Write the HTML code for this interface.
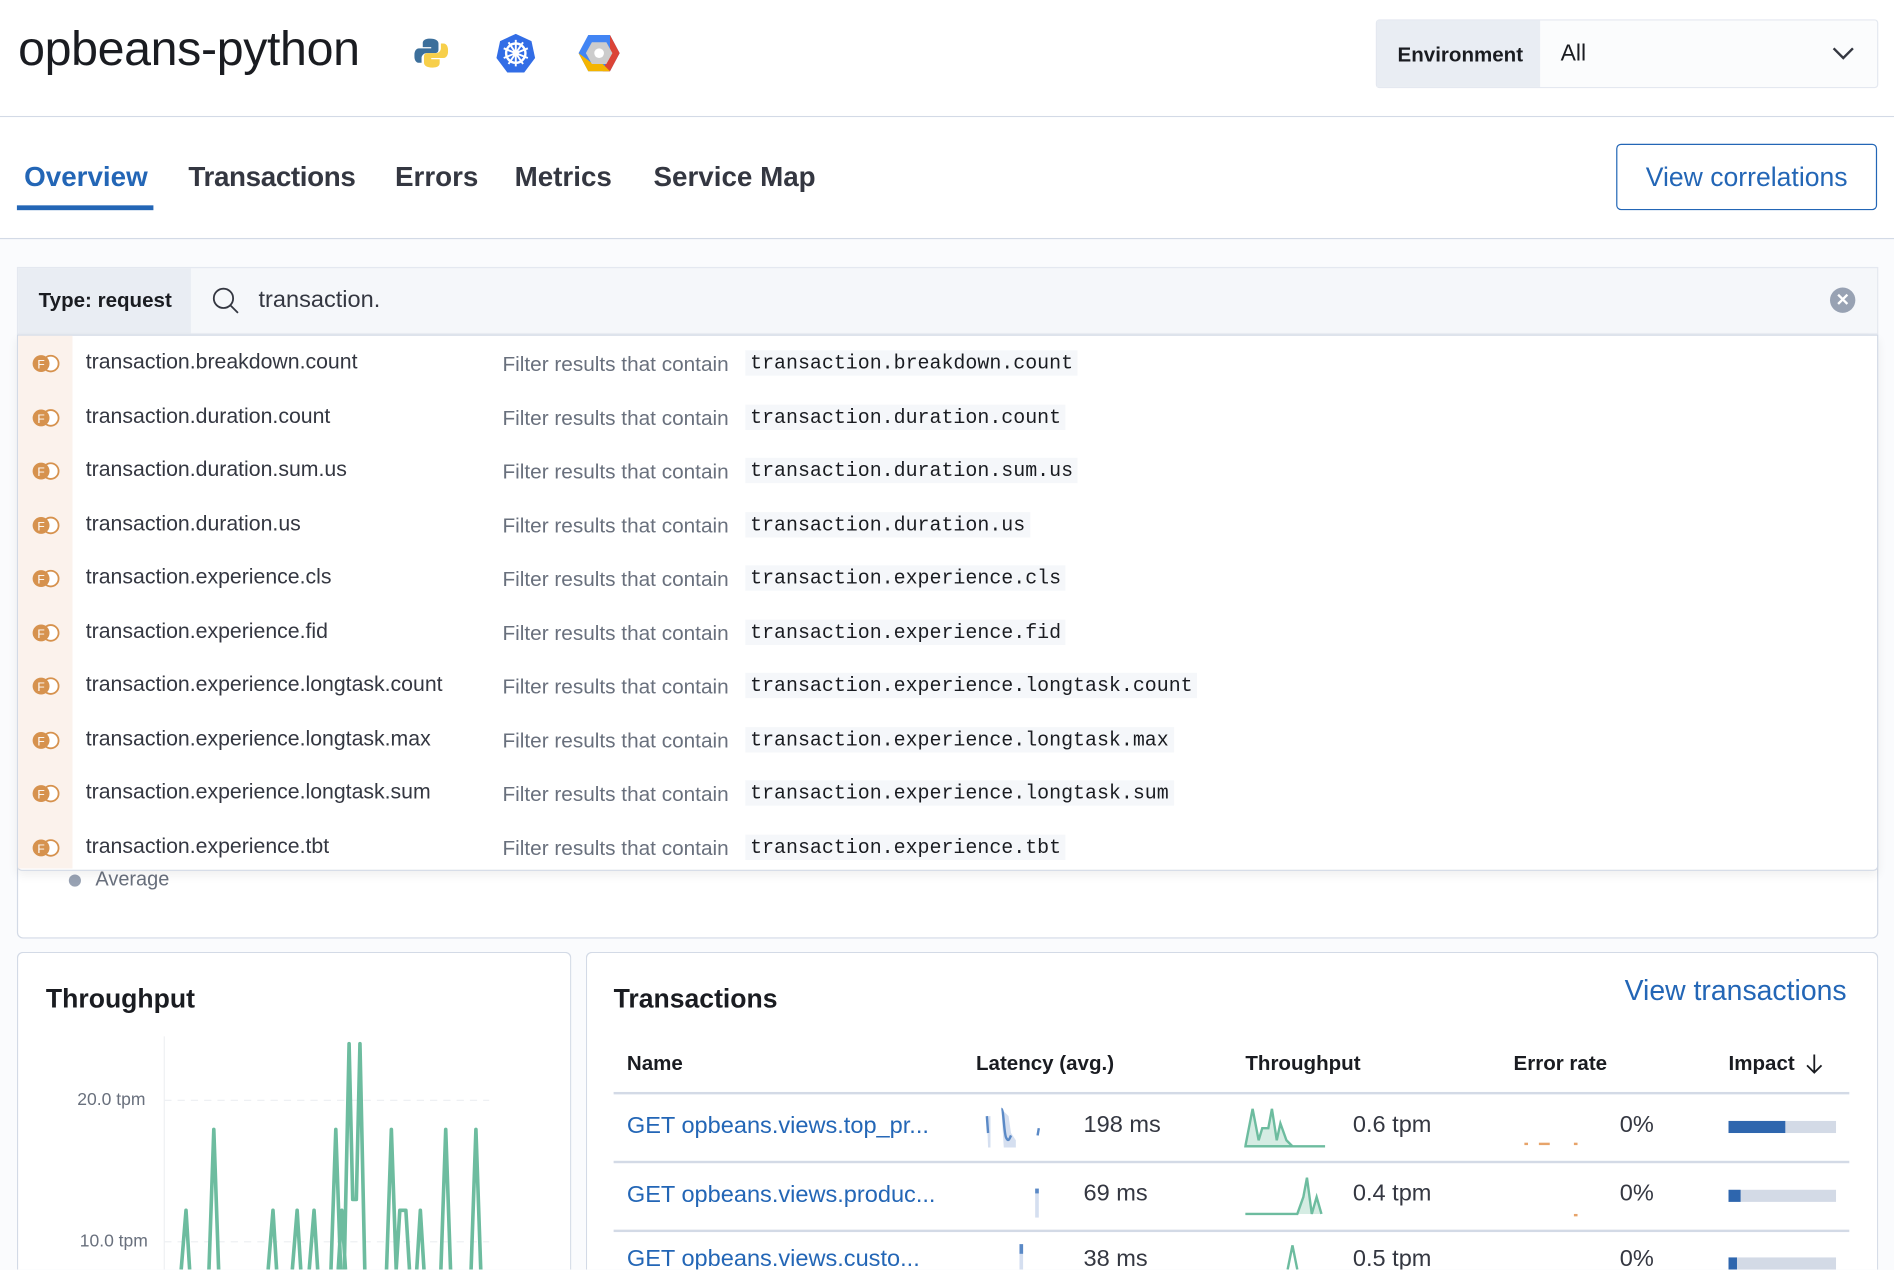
<!DOCTYPE html>
<html><head><meta charset="utf-8"><style>
html,body{margin:0;padding:0;width:1894px;height:1270px;overflow:hidden;background:#fafbfd}
#w{position:absolute;left:0;top:0;width:1568px;height:1051px;overflow:hidden;transform:scale(1.20791);transform-origin:0 0;font-family:"Liberation Sans",sans-serif;color:#343741}
.a{position:absolute}
.mono{font-family:"Liberation Mono",monospace}
</style></head><body><div id="w">
<div class="a" style="left:0;top:0;width:1568px;height:96px;background:#fff;border-bottom:1px solid #d3dae6"></div>
<div class="a" style="left:15px;top:19px;font-size:40px;color:#1a1c21;letter-spacing:-0.3px">opbeans-python</div>
<svg class="a" style="left:343px;top:30px" width="28" height="28" viewBox="0 0 28 28"><path d="M13 2c-6 0-6 3-6 4v3h7v1H4c-3 0-4 3-4 6s1 6 4 6h2v-4c0-2 2-4 4-4h7c2 0 3-1 3-3V6c0-2-2-4-7-4z" fill="#3c6f9b"/><path d="M15 26c6 0 6-3 6-4v-3h-7v-1h10c3 0 4-3 4-6s-1-6-4-6h-2v4c0 2-2 4-4 4h-7c-2 0-3 1-3 3v5c0 2 2 4 7 4z" fill="#f7cf4a"/></svg>
<svg class="a" style="left:410px;top:27px" width="34" height="34" viewBox="0 0 34 34"><path d="M17 1l13 6 3 14-9 12H10L1 21 4 7z" fill="#326de6"/><circle cx="17" cy="17" r="8" fill="none" stroke="#fff" stroke-width="2"/><path d="M17 6v22M7 13l20 8M7 21l20-8M11 8l12 18M23 8L11 26" stroke="#fff" stroke-width="1.6"/><circle cx="17" cy="17" r="2.5" fill="#fff"/></svg>
<svg class="a" style="left:478px;top:27px" width="36" height="34" viewBox="0 0 36 34"><path d="M9 2h18l8 15-8 15H9L1 17z" fill="#4285f4"/><path d="M27 2l8 15-8 15h-6l6-15z" fill="#db4437"/><path d="M1 17l8 15h18l-6-6H13z" fill="#f4b400"/><path d="M12 8h12l5 9-5 9H12l-5-9z" fill="#ccc"/><circle cx="18" cy="17" r="4" fill="#fff"/></svg>
<div class="a" style="left:1139px;top:16px;width:414px;height:55px;border:1px solid #e4e8f0;background:#fbfcfd;border-radius:3px"></div>
<div class="a" style="left:1140px;top:17px;width:135px;height:55px;background:#e9edf3"></div>
<div class="a" style="left:1157px;top:36px;font-size:17px;font-weight:bold;color:#1a1c21">Environment</div>
<div class="a" style="left:1292px;top:34px;font-size:19px;color:#1a1c21">All</div>
<svg class="a" style="left:1516px;top:37px" width="20" height="14"><path d="M2 3l8 8 8-8" stroke="#343741" stroke-width="2" fill="none"/></svg>

<div class="a" style="left:0;top:97px;width:1568px;height:100px;background:#fff;border-bottom:1px solid #d3dae6"></div>
<div class="a" style="left:20px;top:133px;font-size:23px;font-weight:bold;color:#2366b6">Overview</div>
<div class="a" style="left:14px;top:170px;width:113px;height:4px;background:#2366b6"></div>
<div class="a" style="left:156px;top:133px;font-size:23px;font-weight:bold;color:#343741;letter-spacing:-0.3px">Transactions</div>
<div class="a" style="left:327px;top:133px;font-size:23px;font-weight:bold;color:#343741">Errors</div>
<div class="a" style="left:426px;top:133px;font-size:23px;font-weight:bold;color:#343741">Metrics</div>
<div class="a" style="left:541px;top:133px;font-size:23px;font-weight:bold;color:#343741">Service Map</div>
<div class="a" style="left:1338px;top:119px;width:214px;height:53px;border:1.5px solid #2366b6;border-radius:4px;background:#fff;text-align:center;line-height:53px;font-size:22px;color:#2366b6">View correlations</div>

<div class="a" style="left:14px;top:700px;width:1539px;height:75px;background:#fff;border:1px solid #d3dae6;border-radius:5px"></div>
<div class="a" style="left:57px;top:724px;width:10px;height:10px;border-radius:5px;background:#98a2b3"></div>
<div class="a" style="left:79px;top:719px;font-size:16.5px;color:#69707d">Average</div>

<div class="a" style="left:14px;top:221px;width:1539px;height:54px;background:#f5f7fa;border:1px solid #e4e8f0"></div>
<div class="a" style="left:15px;top:222px;width:143px;height:54px;background:#e9edf3"></div>
<div class="a" style="left:32px;top:239px;font-size:17px;font-weight:bold;color:#1a1c21">Type: request</div>
<svg class="a" style="left:174px;top:236px" width="26" height="26"><circle cx="11" cy="11" r="8" stroke="#343741" stroke-width="1.5" fill="none"/><path d="M17 17l6 6" stroke="#343741" stroke-width="1.5"/></svg>
<div class="a" style="left:214px;top:237px;font-size:19.5px;color:#343741">transaction.</div>
<div class="a" style="left:1515px;top:238px;width:21px;height:21px;border-radius:11px;background:#98a2b3;color:#fff;text-align:center;line-height:21px;font-size:14px;font-weight:bold">✕</div>

<div class="a" style="left:14px;top:277px;width:1539px;height:442px;background:#fff;border:1px solid #d3dae6;border-radius:0 0 4px 4px;box-shadow:0 4px 8px rgba(0,0,0,.06)"></div>
<div class="a" style="left:15px;top:278px;width:45px;height:441px;background:#fbf2ec"></div>
<div id="sug"></div>

<div class="a" style="left:14px;top:788px;width:457px;height:263px;background:#fff;border:1px solid #d3dae6;border-bottom:none;border-radius:5px 5px 0 0"></div>
<div class="a" style="left:38px;top:814px;font-size:22px;font-weight:bold;color:#1a1c21">Throughput</div>
<div class="a" style="left:64px;top:903px;font-size:14.5px;color:#69707d">20.0 tpm</div>
<div class="a" style="left:66px;top:1020px;font-size:14.5px;color:#69707d">10.0 tpm</div>
<svg class="a" style="left:130px;top:850px" width="280" height="201">
<path d="M6 8V201" stroke="#eef0f3"/>
<path d="M6 61H275M6 178H275" stroke="#eef0f3" stroke-dasharray="6 5"/>
<g fill="none" stroke="#6dbc9f" stroke-width="3" stroke-linejoin="round">
<path d="M20 201L24 152L27 201M43 201L47 85L51 201M92 201L96 152L99 201M112 201L116 152L119 201M126 201L130 152L133 201M144 201L148 85L152 201M150 201L153 152L156 201M155 201L159 14L162 143L165 143L168 14L172 201M190 201L194 85L198 201M198 201L201 152L206 152L209 201M215 201L218 152L221 201M235 201L239 85L243 201M260 201L264 85L268 201"/>
</g></svg>

<div class="a" style="left:485px;top:788px;width:1068px;height:263px;background:#fff;border:1px solid #d3dae6;border-bottom:none;border-radius:5px 5px 0 0"></div>
<div class="a" style="left:508px;top:814px;font-size:22px;font-weight:bold;color:#1a1c21">Transactions</div>
<div class="a" style="left:1345px;top:807px;font-size:23.5px;color:#2366b6">View transactions</div>
<div class="a" style="left:519px;top:871px;font-size:17px;font-weight:bold;color:#1a1c21">Name</div>
<div class="a" style="left:808px;top:871px;font-size:17px;font-weight:bold;color:#1a1c21">Latency (avg.)</div>
<div class="a" style="left:1031px;top:871px;font-size:17px;font-weight:bold;color:#1a1c21">Throughput</div>
<div class="a" style="left:1253px;top:871px;font-size:17px;font-weight:bold;color:#1a1c21">Error rate</div>
<div class="a" style="left:1431px;top:871px;font-size:17px;font-weight:bold;color:#1a1c21">Impact</div>
<svg class="a" style="left:1494px;top:872px" width="16" height="18"><path d="M8 1v15M2 10l6 6 6-6" stroke="#1a1c21" stroke-width="1.5" fill="none"/></svg>
<div class="a" style="left:508px;top:904px;width:1023px;height:2px;background:#d3dae6"></div>
<div class="a" style="left:508px;top:961px;width:1023px;height:2px;background:#d3dae6"></div>
<div class="a" style="left:508px;top:1018px;width:1023px;height:2px;background:#d3dae6"></div>
<div class="a" style="left:519px;top:921px;font-size:19.5px;color:#2366b6">GET opbeans.views.top_pr...</div>
<div class="a" style="left:897px;top:920px;font-size:19.5px;color:#343741">198 ms</div>
<div class="a" style="left:1120px;top:920px;font-size:19.5px;color:#343741">0.6 tpm</div>
<div class="a" style="left:1341px;top:920px;font-size:19.5px;color:#343741">0%</div>
<div class="a" style="left:1431px;top:928px;width:89px;height:10px;background:#d3dae6"></div><div class="a" style="left:1431px;top:928px;width:47px;height:10px;background:#2e66ae"></div>
<div class="a" style="left:519px;top:978px;font-size:19.5px;color:#2366b6">GET opbeans.views.produc...</div>
<div class="a" style="left:897px;top:977px;font-size:19.5px;color:#343741">69 ms</div>
<div class="a" style="left:1120px;top:977px;font-size:19.5px;color:#343741">0.4 tpm</div>
<div class="a" style="left:1341px;top:977px;font-size:19.5px;color:#343741">0%</div>
<div class="a" style="left:1431px;top:985px;width:89px;height:10px;background:#d3dae6"></div><div class="a" style="left:1431px;top:985px;width:10px;height:10px;background:#2e66ae"></div>
<div class="a" style="left:519px;top:1033px;font-size:19.5px;line-height:18px;height:18px;overflow:hidden;color:#2366b6">GET opbeans.views.custo...</div>
<div class="a" style="left:897px;top:1033px;font-size:19.5px;line-height:18px;height:18px;overflow:hidden;color:#343741">38 ms</div>
<div class="a" style="left:1120px;top:1033px;font-size:19.5px;line-height:18px;height:18px;overflow:hidden;color:#343741">0.5 tpm</div>
<div class="a" style="left:1341px;top:1033px;font-size:19.5px;line-height:18px;height:18px;overflow:hidden;color:#343741">0%</div>
<div class="a" style="left:1431px;top:1041px;width:89px;height:10px;background:#d3dae6"></div><div class="a" style="left:1431px;top:1041px;width:7px;height:10px;background:#2e66ae"></div>
<svg class="a" style="left:815px;top:914px" width="50" height="36"><path d="M2 10L3 36H5V10ZM14 4L16 36H26V30L22 24L20 10Z" fill="#d5dff0"/><path d="M2 10l1 14M14 4c2 0 2 20 4 24s3 0 4-2M45 20l-1 6" stroke="#5a89c6" stroke-width="2" fill="none"/></svg>
<svg class="a" style="left:1030px;top:914px" width="70" height="36"><path d="M1 35L7 4L12 30L15 20L20 20L23 4L27 30L30 16L35 30L40 35Z" fill="#d5ece3" stroke="#6dbc9f" stroke-width="2"/><path d="M1 35H67" stroke="#6dbc9f" stroke-width="2"/></svg>
<svg class="a" style="left:1030px;top:971px" width="70" height="36"><path d="M1 34H44L49 20L52 4L56 34L60 20L64 34" fill="#d5ece3" stroke="#6dbc9f" stroke-width="2"/></svg>
<svg class="a" style="left:1060px;top:1028px" width="20" height="23"><path d="M6 23L10 3L14 23" fill="none" stroke="#6dbc9f" stroke-width="2"/></svg>
<div class="a" style="left:1262px;top:946px;width:3px;height:2px;background:#e7a46a"></div><div class="a" style="left:1274px;top:946px;width:9px;height:2px;background:#e7a46a"></div><div class="a" style="left:1303px;top:946px;width:3px;height:2px;background:#e7a46a"></div>
<div class="a" style="left:1303px;top:1005px;width:3px;height:2px;background:#e7a46a"></div>
<div class="a" style="left:857px;top:984px;width:3px;height:20px;background:#d5dff0;border-top:4px solid #5a89c6"></div>
<div class="a" style="left:844px;top:1030px;width:3px;height:13px;background:#d5dff0;border-top:8px solid #5a89c6"></div>
</div>
<script>
var items=["breakdown.count","duration.count","duration.sum.us","duration.us","experience.cls","experience.fid","experience.longtask.count","experience.longtask.max","experience.longtask.sum","experience.tbt"];
var h="";items.forEach(function(s,i){var y=278+i*44.5;
h+='<svg class="a" style="left:26px;top:'+(y+15)+'px" width="24" height="16"><circle cx="16" cy="8" r="6.5" fill="#fff" stroke="#d6924e" stroke-width="1.5"/><circle cx="8" cy="8" r="7" fill="#d6924e"/><text x="8" y="12" font-size="10" fill="#fff" text-anchor="middle" font-family="Liberation Sans">F</text></svg>';
h+='<div class="a" style="left:71px;top:'+(y+11)+'px;font-size:17.6px;color:#343741">transaction.'+s+'</div>';
h+='<div class="a" style="left:416px;top:'+(y+13)+'px;font-size:17.2px;color:#69707d">Filter results that contain</div>';
h+='<div class="a mono" style="left:617px;top:'+(y+12)+'px;font-size:16.5px;color:#1a1c21;background:#f5f7fa;padding:1px 4px">transaction.'+s+'</div>';});
document.getElementById("sug").outerHTML=h;
</script>
</body></html>
